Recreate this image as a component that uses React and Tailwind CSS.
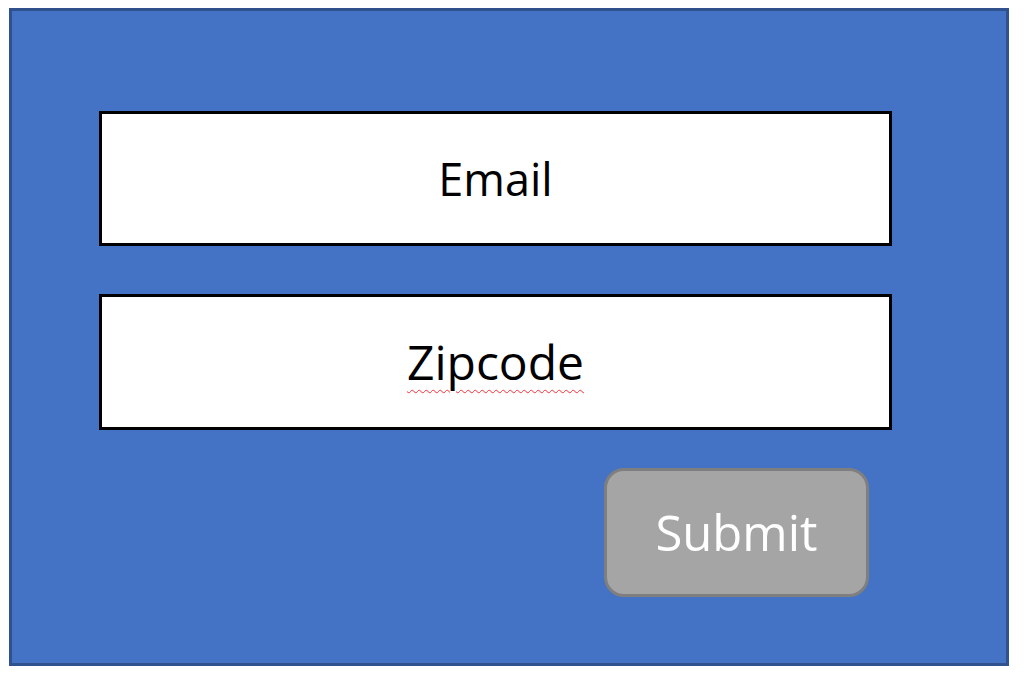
import React from 'react';

const font = { fontFamily: '"Open Sans", "Noto Sans", sans-serif' };

// Simple signup form mockup: two input boxes and a submit button on a blue card
const App = () => {
  return (
    <div className="min-h-screen bg-white pl-[9px] pt-[8px]" style={font}>
      <div className="w-[1000px] h-[658px] bg-[#4472c4] border-[3px] border-[#2f528f] pl-[87px] pt-[100px] flex flex-col items-start">
        {/* Email */}
        <div className="w-[793px] h-[135px] bg-white border-[3px] border-black flex items-center justify-center">
          <span className="text-[45px] text-black leading-none">Email</span>
        </div>

        {/* Zipcode */}
        <div className="mt-[48px] w-[793px] h-[136px] bg-white border-[3px] border-black flex items-center justify-center">
          <span className="text-[48px] text-black leading-none underline decoration-wavy decoration-red-500 decoration-1 underline-offset-[9px]">
            Zipcode
          </span>
        </div>

        {/* Submit */}
        <button className="mt-[38px] ml-[505px] w-[265px] h-[129px] bg-[#a5a5a5] border-[3px] border-[#7f7f7f] rounded-[20px] flex items-center justify-center">
          <span className="text-[49px] text-white leading-none">Submit</span>
        </button>
      </div>
    </div>
  );
};

export default App;
